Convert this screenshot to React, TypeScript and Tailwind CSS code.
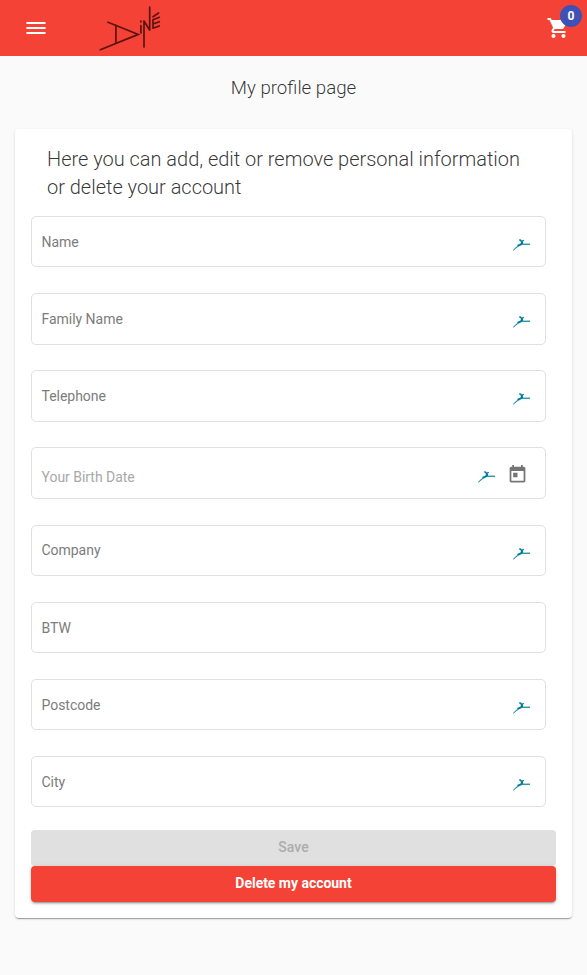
type Field = { label: string; fill: boolean; date?: boolean };

const fields: Field[] = [
  { label: 'Name', fill: true },
  { label: 'Family Name', fill: true },
  { label: 'Telephone', fill: true },
  { label: 'Your Birth Date', fill: true, date: true },
  { label: 'Company', fill: true },
  { label: 'BTW', fill: false },
  { label: 'Postcode', fill: true },
  { label: 'City', fill: true },
];

function Logo() {
  return (
    <svg className="ml-[50px] h-14 w-[64px]" viewBox="98 0 64 56" fill="none" stroke="#5c130f" strokeWidth="1.7" strokeLinecap="round">
      <path d="M108 22.2 138.3 34.4 100.3 49.7M115.9 25V43.3" />
      <path d="M140.9 25.5V33M140.9 21.2V21.8M144 21V47M144 21 149.6 30M149.7 7V30" />
      <path d="M153 19.5V28M153 16.7 158.5 13M153 19.8 159.3 17.3M153 24 159.3 21.7M153 28.2 159.3 26" />
    </svg>
  );
}

function Runner() {
  return (
    <svg className="h-3 w-[18px]" viewBox="0 0 18 12" fill="#007c97" stroke="#007c97" strokeWidth="0.15">
      <path d="M6.3 0.2 8 0.6 8.6 1.5 10.8 1 11 1.8 9.8 2.5 10.1 4.7H17V5.7H9.2L5.5 7.6 3 9.2 0.5 11.6 0 11.3 2.4 8.7 4.7 6.9 4.2 6 7.6 4.6 8.1 2.8 6.3 1.5Z" />
    </svg>
  );
}

function FormField({ label, fill, date }: Field) {
  return (
    <div className="flex h-[51.4px] w-[515px] items-center rounded-[5px] border border-[#e0e0e0] pl-[9.5px] pr-[14px]">
      <span className={date ? 'grow pt-[8px] tracking-[-0.03px] text-[#a8a8a8]' : 'grow pt-[0.4px] tracking-[-0.03px] text-[#7c7c7c]'}>{label}</span>
      {fill && <span className={date ? 'pt-[8px]' : 'pt-[7px]'}><Runner /></span>}
      {date && (
        <svg className="ml-[11px] mr-[3px] mt-[3px] size-[21px]" viewBox="0 0 24 24" fill="#757575">
          <path d="M19 3h-1V1h-2v2H8V1H6v2H5c-1.11 0-1.99.9-1.99 2L3 19c0 1.1.89 2 2 2h14c1.1 0 2-.9 2-2V5c0-1.1-.9-2-2-2zm0 16H5V8h14v11zM7 10h5v5H7z" />
        </svg>
      )}
    </div>
  );
}

export default function App() {
  return (
    <div className="h-[975px] w-[587px] overflow-hidden bg-[#fafafa] font-['Roboto',sans-serif] text-sm">
      <header className="flex h-14 items-center bg-[#f44336] pl-6">
        <svg className="size-6" viewBox="0 0 24 24" fill="white">
          <path d="M2.4 6H21.6V8H2.4zM2.4 11H21.6V13H2.4zM2.4 16H21.6V18H2.4z" />
        </svg>
        <Logo />
        <div className="relative ml-auto mr-[17px] size-6">
          <svg className="size-6" viewBox="-0.5 0 24 24" fill="white">
            <path d="M7 18c-1.1 0-1.99.9-1.99 2S5.9 22 7 22s2-.9 2-2-.9-2-2-2zM1 2v2h2l3.6 7.59-1.35 2.45c-.16.28-.25.61-.25.96 0 1.1.9 2 2 2h12v-2H7.42c-.14 0-.25-.11-.25-.25l.03-.12.9-1.63h7.45c.75 0 1.41-.41 1.75-1.03l3.58-6.49A1.003 1.003 0 0 0 20 4H5.21l-.94-2H1zm16 16c-1.1 0-1.99.9-1.99 2s.89 2 1.99 2 2-.9 2-2-.9-2-2-2z" />
          </svg>
          <span className="absolute left-[14px] top-[-11px] flex size-[22px] items-center justify-center rounded-full bg-[#3f51b5] text-xs font-bold text-white">0</span>
        </div>
      </header>
      <h1 className="mt-4 text-center text-[18.7px] font-light leading-8 text-black/80">My profile page</h1>
      <main className="ml-[15px] mt-[25px] h-[789px] w-[557px] rounded bg-white px-4 pt-4 shadow-[0_2px_1px_-1px_rgba(0,0,0,.2),0_1px_1px_rgba(0,0,0,.14),0_1px_3px_rgba(0,0,0,.12)]">
        <h2 className="ml-4 text-[20px] font-light leading-7 tracking-[-0.02px] text-black/80">
          Here you can add, edit or remove personal information<br />or delete your account
        </h2>
        <div className="mt-[15px] flex flex-col gap-[25.74px]">
          {fields.map((field) => <FormField key={field.label} {...field} />)}
        </div>
        <div className="mt-[22.6px] flex w-[525px] flex-col">
          <button className="h-9 rounded bg-[#e0e0e0] pb-px font-medium text-[#acacac]">Save</button>
          <button className="h-9 rounded bg-[#f44336] pb-px font-bold tracking-[-0.03px] text-white shadow-[0_3px_1px_-2px_rgba(0,0,0,.2),0_2px_2px_rgba(0,0,0,.14),0_1px_5px_rgba(0,0,0,.12)]">Delete my account</button>
        </div>
      </main>
    </div>
  );
}
